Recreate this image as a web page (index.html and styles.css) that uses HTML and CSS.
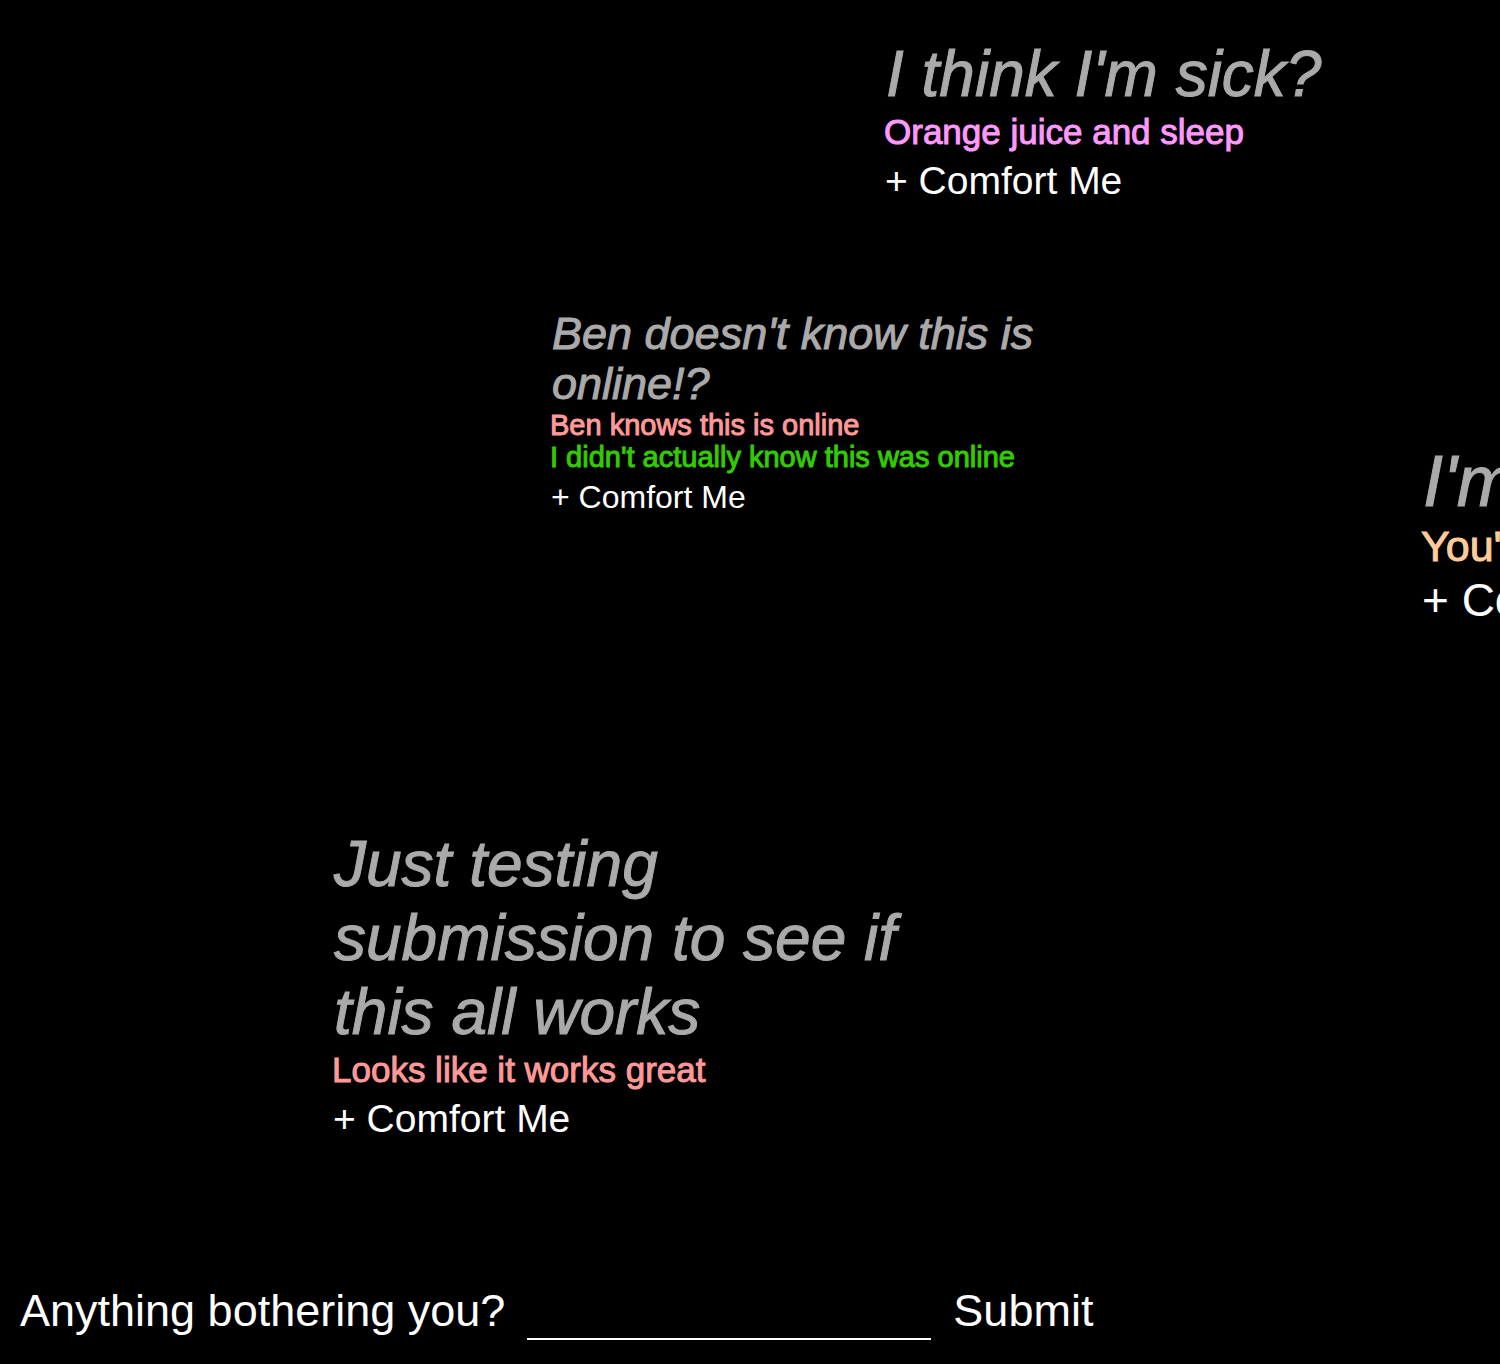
FILE: index.html
```html
<!DOCTYPE html>
<html lang="en">
<head>
<meta charset="utf-8">
<title>Comfort Me</title>
<link rel="stylesheet" href="styles.css">
</head>
<body>
<main class="canvas">
  <article class="worry worry-sick size-large">
    <h2 class="problem">I think I'm sick?</h2>
    <p class="reply pink">Orange juice and sleep</p>
    <button class="comfort" type="button">+ Comfort Me</button>
  </article>
  <article class="worry worry-ben size-small">
    <h2 class="problem">Ben doesn't know this is online!?</h2>
    <p class="reply coral">Ben knows this is online</p>
    <p class="reply green">I didn't actually know this was online</p>
    <button class="comfort" type="button">+ Comfort Me</button>
  </article>
  <article class="worry worry-edge size-huge">
    <h2 class="problem">I'm</h2>
    <p class="reply peach">You're</p>
    <button class="comfort" type="button">+ Comfort Me</button>
  </article>
  <article class="worry worry-test size-large">
    <h2 class="problem">Just testing submission to see if this all works</h2>
    <p class="reply coral">Looks like it works great</p>
    <button class="comfort" type="button">+ Comfort Me</button>
  </article>
</main>
<form class="ask">
  <label class="ask-label" for="worry">Anything bothering you?</label>
  <input class="ask-input" id="worry" type="text">
  <button class="ask-submit" type="submit">Submit</button>
</form>
</body>
</html>
```
FILE: styles.css
```css
* {
  box-sizing: border-box;
}

body {
  margin: 0;
  min-height: 100vh;
  display: flex;
  flex-direction: column;
  background: #000;
  color: #fff;
  font-family: "Liberation Sans", Arial, sans-serif;
}

.canvas {
  position: relative;
  flex: 1;
  overflow: hidden;
}

button {
  padding: 0;
  border: 0;
  background: none;
  color: inherit;
  font: inherit;
  cursor: pointer;
}

.worry {
  position: absolute;
}

.worry-sick {
  left: 884px;
  top: 37px;
  width: 600px;
}

.worry-ben {
  left: 550px;
  top: 309px;
  width: 500px;
}

.worry-edge {
  left: 1421px;
  top: 439px;
  width: 700px;
}

.worry-test {
  left: 332px;
  top: 827px;
  width: 600px;
}

.problem,
.reply {
  margin: 0;
  font-weight: 400;
  -webkit-text-stroke: 1px currentColor;
}

.problem {
  padding-left: 2px;
  color: #aaa;
  font-style: italic;
}

.comfort {
  display: block;
  padding-left: 1px;
}

.size-small .problem {
  font-size: 45px;
  line-height: 50px;
}

.size-small .reply {
  font-size: 29px;
  line-height: 32px;
}

.size-small .comfort {
  margin-top: 5px;
  font-size: 32px;
  line-height: 38px;
}

.size-large .problem {
  font-size: 64px;
  line-height: 74px;
}

.size-large .reply {
  font-size: 35px;
  line-height: 42px;
}

.size-large .comfort {
  margin-top: 4px;
  font-size: 39px;
  line-height: 48px;
}

.size-huge .problem {
  font-size: 72px;
  line-height: 84px;
}

.size-huge .reply {
  font-size: 43px;
  line-height: 46px;
}

.size-huge .comfort {
  margin-top: 4px;
  font-size: 46px;
  line-height: 54px;
}

.pink {
  color: #f9f;
}

.coral {
  color: #f99;
}

.green {
  color: #3c0;
}

.peach {
  color: #fc9;
}

.ask {
  display: flex;
  align-items: flex-start;
  gap: 22px;
  padding: 0 20px 24px;
  font-size: 45px;
  line-height: 54px;
}

.ask-input {
  width: 404px;
  height: 56px;
  padding: 0;
  border: 0;
  border-bottom: 2px solid #fff;
  outline: 0;
  background: none;
  color: inherit;
  font: inherit;
}
```
